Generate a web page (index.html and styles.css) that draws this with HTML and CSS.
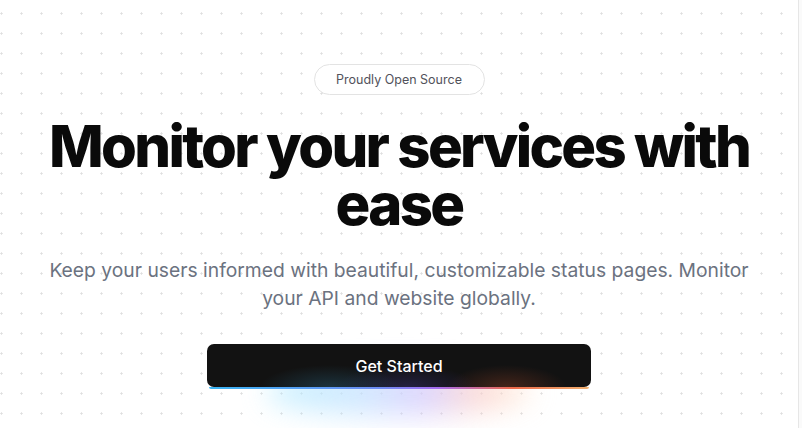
FILE: index.html
```html
<!DOCTYPE html>
<html lang="en">
<head>
<meta charset="utf-8">
<title>OpenStatus</title>
<link rel="stylesheet" href="styles.css">
</head>
<body>
<div class="page">
  <main class="hero">
    <a class="badge" href="#">Proudly Open Source</a>
    <h1 class="title">Monitor your services with ease</h1>
    <p class="lead">Keep your users informed with beautiful, customizable status pages. Monitor your API and website globally.</p>
    <div class="cta">
      <div class="glow"></div>
      <a class="button" href="#">Get Started</a>
    </div>
  </main>
  <div class="edge"></div>
</div>
</body>
</html>
```

FILE: styles.css
```css
* { box-sizing: border-box; }
html, body { margin: 0; padding: 0; }
body {
  font-family: Inter, "Noto Sans", sans-serif;
  background: #fff;
  overflow: hidden;
}
.page {
  display: flex;
  height: 428px;
  background-color: #fff;
  background-image: radial-gradient(circle at 1.5px 1.5px, #dedede 0.9px, transparent 1.3px);
  background-size: 20px 20px;
  background-position: 0 12px;
}
.hero {
  flex: 1;
  display: flex;
  flex-direction: column;
  align-items: center;
  padding-top: 64px;
}
.edge {
  width: 4px;
  border-left: 1px solid #e6e6e6;
  background: #fafafa;
}
.badge {
  display: inline-flex;
  align-items: center;
  justify-content: center;
  width: 171px;
  height: 31px;
  border: 1px solid #e3e3e3;
  border-radius: 999px;
  background: #fff;
  color: #52525b;
  font-size: 12.5px;
  font-weight: 400;
  text-decoration: none;
}
.title {
  margin: 22px 0 0;
  font-size: 58px;
  line-height: 58px;
  font-weight: 800;
  letter-spacing: -0.046em;
  color: #0a0a0a;
  text-align: center;
  max-width: 720px;
}
.lead {
  margin: 23px 0 0;
  font-size: 19.3px;
  line-height: 28px;
  color: #6b7280;
  text-align: center;
  max-width: 712px;
}
.cta {
  position: relative;
  margin-top: 32px;
  width: 384px;
  height: 43px;
}
.glow {
  position: absolute;
  left: 60px;
  right: 60px;
  top: 24px;
  height: 48px;
  border-radius: 50%;
  background: linear-gradient(90deg, #b2ebff 0%, #c2e2ff 35%, #d3c8fd 60%, #fbcfc9 80%, #ffe8d2 100%);
  filter: blur(14px);
  opacity: 0.75;
}
.button {
  position: relative;
  display: flex;
  align-items: center;
  justify-content: center;
  height: 43px;
  border-radius: 7px;
  color: #fff;
  font-size: 16px;
  font-weight: 500;
  text-decoration: none;
  background:
    radial-gradient(ellipse 70px 22px at 32% 100%, rgba(45, 110, 140, 0.35), transparent),
    radial-gradient(ellipse 70px 22px at 52% 100%, rgba(70, 60, 150, 0.35), transparent),
    radial-gradient(ellipse 60px 22px at 78% 100%, rgba(160, 70, 40, 0.35), transparent),
    #121212;
}
.button::after {
  content: "";
  position: absolute;
  left: 2px;
  right: 2px;
  bottom: -1.5px;
  height: 1.5px;
  border-radius: 0 0 6px 6px;
  background: linear-gradient(90deg, #3ab4f2 0%, #6e8cf5 45%, #a66cf0 60%, #ee6a4a 80%, #f0b070 100%);
}
```
